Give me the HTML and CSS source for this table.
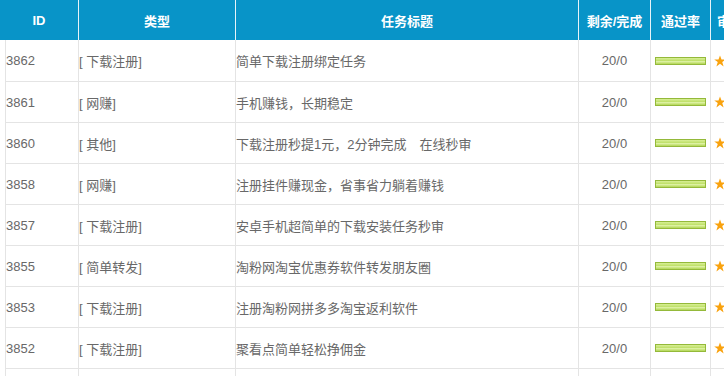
FILE: index.html
```html
<!DOCTYPE html>
<html>
<head>
<meta charset="utf-8">
<link rel="stylesheet" href="styles.css">
</head>
<body>
<div class="table">
  <div class="head">
    <div class="c c1">ID</div>
    <div class="c c2">类型</div>
    <div class="c c3">任务标题</div>
    <div class="c c4">剩余/完成</div>
    <div class="c c5">通过率</div>
    <div class="c c6">审核</div>
  </div>
  <div class="row first">
    <div class="c c1">3862</div><div class="c c2">[ 下载注册]</div><div class="c c3">简单下载注册绑定任务</div><div class="c c4">20/0</div><div class="c c5"><span class="bar"></span></div><div class="c c6"><svg class="star" viewBox="0 0 24 24"><polygon points="12,1 15,9 23.5,9 16.5,14.2 19.2,22.8 12,17.5 4.8,22.8 7.5,14.2 0.5,9 9,9"/></svg></div>
  </div>
  <div class="row">
    <div class="c c1">3861</div><div class="c c2">[ 网赚]</div><div class="c c3">手机赚钱，长期稳定</div><div class="c c4">20/0</div><div class="c c5"><span class="bar"></span></div><div class="c c6"><svg class="star" viewBox="0 0 24 24"><polygon points="12,1 15,9 23.5,9 16.5,14.2 19.2,22.8 12,17.5 4.8,22.8 7.5,14.2 0.5,9 9,9"/></svg></div>
  </div>
  <div class="row">
    <div class="c c1">3860</div><div class="c c2">[ 其他]</div><div class="c c3">下载注册秒提1元，2分钟完成　在线秒审</div><div class="c c4">20/0</div><div class="c c5"><span class="bar"></span></div><div class="c c6"><svg class="star" viewBox="0 0 24 24"><polygon points="12,1 15,9 23.5,9 16.5,14.2 19.2,22.8 12,17.5 4.8,22.8 7.5,14.2 0.5,9 9,9"/></svg></div>
  </div>
  <div class="row">
    <div class="c c1">3858</div><div class="c c2">[ 网赚]</div><div class="c c3">注册挂件赚现金，省事省力躺着赚钱</div><div class="c c4">20/0</div><div class="c c5"><span class="bar"></span></div><div class="c c6"><svg class="star" viewBox="0 0 24 24"><polygon points="12,1 15,9 23.5,9 16.5,14.2 19.2,22.8 12,17.5 4.8,22.8 7.5,14.2 0.5,9 9,9"/></svg></div>
  </div>
  <div class="row">
    <div class="c c1">3857</div><div class="c c2">[ 下载注册]</div><div class="c c3">安卓手机超简单的下载安装任务秒审</div><div class="c c4">20/0</div><div class="c c5"><span class="bar"></span></div><div class="c c6"><svg class="star" viewBox="0 0 24 24"><polygon points="12,1 15,9 23.5,9 16.5,14.2 19.2,22.8 12,17.5 4.8,22.8 7.5,14.2 0.5,9 9,9"/></svg></div>
  </div>
  <div class="row">
    <div class="c c1">3855</div><div class="c c2">[ 简单转发]</div><div class="c c3">淘粉网淘宝优惠券软件转发朋友圈</div><div class="c c4">20/0</div><div class="c c5"><span class="bar"></span></div><div class="c c6"><svg class="star" viewBox="0 0 24 24"><polygon points="12,1 15,9 23.5,9 16.5,14.2 19.2,22.8 12,17.5 4.8,22.8 7.5,14.2 0.5,9 9,9"/></svg></div>
  </div>
  <div class="row">
    <div class="c c1">3853</div><div class="c c2">[ 下载注册]</div><div class="c c3">注册淘粉网拼多多淘宝返利软件</div><div class="c c4">20/0</div><div class="c c5"><span class="bar"></span></div><div class="c c6"><svg class="star" viewBox="0 0 24 24"><polygon points="12,1 15,9 23.5,9 16.5,14.2 19.2,22.8 12,17.5 4.8,22.8 7.5,14.2 0.5,9 9,9"/></svg></div>
  </div>
  <div class="row">
    <div class="c c1">3852</div><div class="c c2">[ 下载注册]</div><div class="c c3">聚看点简单轻松挣佣金</div><div class="c c4">20/0</div><div class="c c5"><span class="bar"></span></div><div class="c c6"><svg class="star" viewBox="0 0 24 24"><polygon points="12,1 15,9 23.5,9 16.5,14.2 19.2,22.8 12,17.5 4.8,22.8 7.5,14.2 0.5,9 9,9"/></svg></div>
  </div>
  <div class="row tail">
    <div class="c c1"></div><div class="c c2"></div><div class="c c3"></div><div class="c c4"></div><div class="c c5"></div><div class="c c6"></div>
  </div>
</div>
</body>
</html>
```
FILE: styles.css
```css
html, body {
  margin: 0;
  padding: 0;
  background: #fff;
  overflow: hidden;
  width: 724px;
  height: 376px;
}
.table {
  width: 724px;
  height: 376px;
  overflow: hidden;
  font-family: "Liberation Sans", "Noto Sans CJK SC", sans-serif;
  font-size: 13px;
}
.head {
  display: grid;
  grid-template-columns: 79px 157px 343px 72px 60px 13px;
  height: 40px;
  background: #0894c8;
  color: #fff;
  font-weight: bold;
}
.head .c {
  display: flex;
  align-items: center;
  justify-content: center;
  border-right: 1px solid #e6f3f9;
  white-space: nowrap;
  overflow: hidden;
}
.head .c6 {
  justify-content: flex-start;
  padding-left: 6px;
  border-right: none;
}
.row {
  display: grid;
  grid-template-columns: 73px 157px 343px 72px 60px 8px;
  margin-left: 5px;
  height: 40px;
  border-left: 1px solid #e4e4e4;
  border-bottom: 1px solid #e4e4e4;
  color: #686868;
}
.row.first {
  height: 41px;
}
.row .c {
  display: flex;
  align-items: center;
  border-right: 1px solid #e4e4e4;
  white-space: nowrap;
  overflow: hidden;
}
.row .c4 {
  justify-content: center;
}
.row .c5 {
  padding-left: 4px;
}
.row .c6 {
  padding-left: 3px;
  border-right: none;
  overflow: visible;
}
.bar {
  display: block;
  width: 49px;
  height: 6px;
  border: 1px solid #94b93a;
  background: linear-gradient(#d8ef96 0%, #bfe06a 45%, #e0f3a8 55%, #b2d655 100%);
}
.star {
  display: block;
  flex: none;
  width: 12px;
  height: 12px;
  fill: #f9a20e;
}
```
